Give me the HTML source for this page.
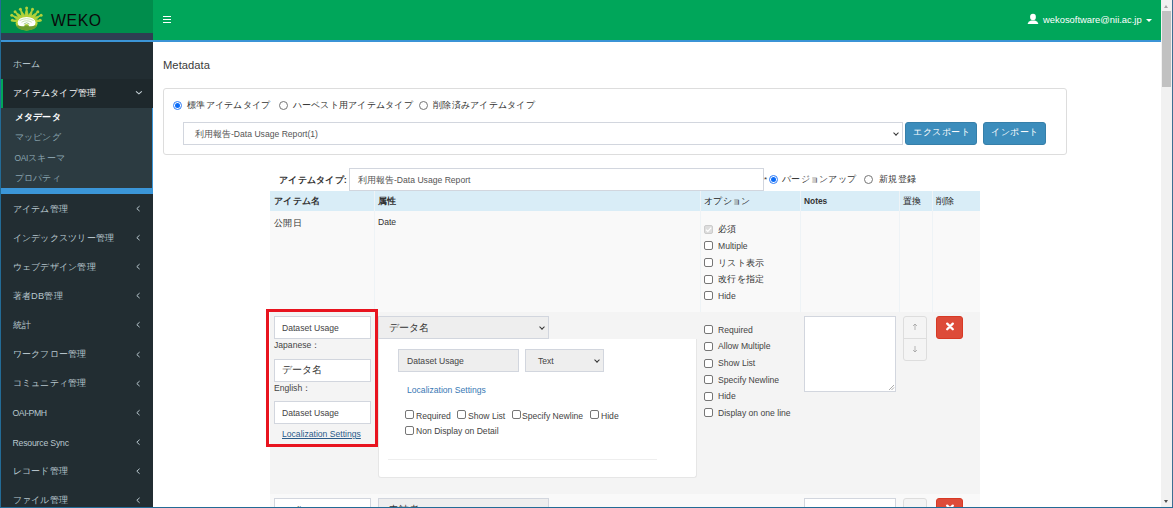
<!DOCTYPE html>
<html><head><meta charset="utf-8">
<style>
*{box-sizing:border-box;margin:0;padding:0}
html,body{width:1173px;height:508px;overflow:hidden;background:#fff}
body{position:relative;font-family:"Liberation Sans",sans-serif;font-size:9.3px;color:#333}
.a{position:absolute}
.t{position:absolute;white-space:nowrap;line-height:12px;height:12px;letter-spacing:0.25px}
.sb .t{color:#b8c7ce}
.chev{position:absolute;color:#b8c7ce;font-size:9px;line-height:12px}
.cb{position:absolute;width:9px;height:9px;border:1px solid #767676;border-radius:2px;background:#fff}
.rd{position:absolute;width:9px;height:9px;border:1px solid #767676;border-radius:50%;background:#fff}
.rd.on{border-color:#2f7cf6}
.rd.on:after{content:"";position:absolute;left:1px;top:1px;width:5px;height:5px;border-radius:50%;background:#0b6cf7}
.inp{position:absolute;background:#fff;border:1px solid #d2d6de}
.dis{position:absolute;background:#eee;border:1px solid #d2d6de}
.sel-chev{position:absolute;width:4px;height:4px;border-right:1.5px solid #333;border-bottom:1.5px solid #333;transform:rotate(45deg)}
.lbl{position:absolute;white-space:nowrap;line-height:12px;height:12px;color:#444;font-size:8.6px}
</style></head><body>

<!-- window borders -->
<div class="a" style="left:0;top:0;width:1px;height:508px;background:#236b96;z-index:50"></div>
<div class="a" style="left:1172px;top:0;width:1px;height:508px;background:#3d6f91;z-index:50"></div>
<div class="a" style="left:0;top:507px;width:1173px;height:1px;background:#236b96;z-index:50"></div>

<!-- logo -->
<div class="a" style="left:0;top:0;width:153px;height:33px;background:#008d4c"></div>
<div class="a" style="left:0;top:33px;width:153px;height:7px;background:#2e3e52"></div>
<svg class="a" style="left:8px;top:4px" width="38" height="30" viewBox="8 4 38 30">
  <path d="M13.5 21.5 L12.4 20.3 L17.5 19.8 L11.8 15.2 L18.5 17.5 L15.1 11.7 L21.8 16.3 L20.4 9.3 L24.8 15.8 L26.6 8.1 L28.4 15.8 L32.5 9.3 L31.2 16.3 L37.8 11.7 L34.5 17.5 L41.1 15.2 L35.5 19.8 L40.2 20.3 L39.5 21.5Z" fill="#b3d23a" stroke="#b3d23a" stroke-width="0.9" stroke-linejoin="round"/>
  <g fill="#b3d23a">
    <circle cx="26.6" cy="8.1" r="1.5"/><circle cx="20.4" cy="9.3" r="1.5"/><circle cx="32.5" cy="9.3" r="1.5"/>
    <circle cx="15.1" cy="11.7" r="1.5"/><circle cx="37.8" cy="11.7" r="1.5"/><circle cx="11.8" cy="15.2" r="1.5"/>
    <circle cx="41.1" cy="15.2" r="1.5"/><circle cx="12.4" cy="20.3" r="1.5"/><circle cx="40.2" cy="20.3" r="1.5"/>
  </g>
  <ellipse cx="26.6" cy="23.4" rx="11" ry="7" fill="#b3d23a"/>
  <path d="M16.1 25.5 A11 7 0 0 0 37.1 25.5 Z" fill="#6e9c2e"/>
  <path d="M17.6 22.4 Q18.2 17.4 26.6 17 Q35 17.4 35.6 22.4 Q35.5 25.2 33.2 25.9 Q30.5 26.4 28.9 26.3 L28.6 24.8 Q26.6 23.2 24.6 24.8 L24.3 26.3 Q22.7 26.4 20 25.9 Q17.7 25.2 17.6 22.4Z" fill="#fff"/>
  <path d="M19.5 20.6 Q26.6 16.8 33.7 20.6" stroke="#9fd07a" stroke-width="0.6" fill="none"/>
  <path d="M21.5 22.3 Q26.6 19.2 31.7 22.3" stroke="#9fd07a" stroke-width="0.6" fill="none"/>
  <path d="M23.8 24 Q26.6 21.6 29.4 24" stroke="#7cb85a" stroke-width="0.7" fill="none"/>
  
</svg>
<div class="t" style="left:51px;top:12.5px;height:16px;line-height:16px;font-size:15.8px;color:#0a0a0a;letter-spacing:0.6px">WEKO</div>

<!-- navbar -->
<div class="a" style="left:153px;top:0;width:1008px;height:40px;background:#00a65a"></div>
<div class="a" style="left:0;top:40px;width:1161px;height:2px;background:#3b94d6"></div>
<div class="a" style="left:163px;top:16px;width:8px;height:1.3px;background:#fff"></div>
<div class="a" style="left:163px;top:19px;width:8px;height:1.3px;background:#fff"></div>
<div class="a" style="left:163px;top:22px;width:8px;height:1.3px;background:#fff"></div>
<svg class="a" style="left:1027px;top:13px" width="12" height="12" viewBox="0 0 12 12">
  <ellipse cx="6" cy="4" rx="2.9" ry="3.3" fill="#fff"/>
  <path d="M0.6 11 Q1 8.2 4 7.4 L8 7.4 Q11 8.2 11.4 11Z" fill="#fff"/>
</svg>
<div class="t" style="left:1043px;top:14px;color:#fff;font-size:9.4px;letter-spacing:0">wekosoftware@nii.ac.jp</div>
<div class="a" style="left:1145.5px;top:19px;width:0;height:0;border-left:3px solid transparent;border-right:3px solid transparent;border-top:3px solid #fff"></div>

<!-- scrollbar -->
<div class="a" style="left:1161px;top:0;width:11px;height:507px;background:#f1f1f1"></div>
<div class="a" style="left:1162px;top:11px;width:9px;height:76px;background:#c1c1c1"></div>
<div class="a" style="left:1164px;top:5px;width:0;height:0;border-left:2.5px solid transparent;border-right:2.5px solid transparent;border-bottom:3px solid #a3a3a3"></div>
<div class="a" style="left:1163.8px;top:499.8px;width:0;height:0;border-left:2.8px solid transparent;border-right:2.8px solid transparent;border-top:3px solid #505050"></div>

<!-- sidebar -->
<div class="sb">
<div class="a" style="left:0;top:42px;width:153px;height:466px;background:#222d32"></div>
<div class="t" style="left:12.5px;top:57.5px">ホーム</div>
<div class="a" style="left:0;top:79px;width:153px;height:29px;background:#1e282c"></div>
<div class="a" style="left:1px;top:79px;width:2px;height:29px;background:#00a65a"></div>
<div class="t" style="left:13px;top:87px;color:#fff">アイテムタイプ管理</div>
<div class="a" style="left:0;top:108px;width:153px;height:80px;background:#2c3b41"></div>
<div class="a" style="left:152px;top:108px;width:1px;height:80px;background:#3b96d8"></div>
<div class="t" style="left:14.5px;top:111px;color:#fff;font-weight:bold">メタデータ</div>
<div class="t" style="left:14.5px;top:130.8px;color:#8aa4af">マッピング</div>
<div class="t" style="left:14.5px;top:151.5px;color:#8aa4af"><span style="font-size:8.4px;letter-spacing:-0.3px">OAI</span>スキーマ</div>
<div class="t" style="left:14.5px;top:171.5px;color:#8aa4af">プロパティ</div>
<div class="a" style="left:0;top:188px;width:153px;height:6px;background:#3b96d8"></div>
<div class="t" style="left:12.5px;top:202.8px">アイテム管理</div>
<div class="t" style="left:12.5px;top:231.7px">インデックスツリー管理</div>
<div class="t" style="left:12.5px;top:260.7px">ウェブデザイン管理</div>
<div class="t" style="left:12.5px;top:290.0px">著者DB管理</div>
<div class="t" style="left:12.5px;top:319.3px">統計</div>
<div class="t" style="left:12.5px;top:348.0px">ワークフロー管理</div>
<div class="t" style="left:12.5px;top:377.0px">コミュニティ管理</div>
<div class="t" style="left:12.5px;top:407px;font-size:8.7px;letter-spacing:-0.45px">OAI-PMH</div>
<div class="t" style="left:12.5px;top:437px;font-size:8.7px;letter-spacing:-0.2px">Resource Sync</div>
<div class="t" style="left:12.5px;top:465.0px">レコード管理</div>
<div class="t" style="left:12.5px;top:494.0px">ファイル管理</div>
</div>
<svg class="a" style="left:0;top:0" width="153" height="508" viewBox="0 0 153 508"><polyline points="136,91.3 138.9,93.8 141.8,91.3" fill="none" stroke="#c8d3d8" stroke-width="1.1"/><polyline points="139.6,206.1 136.8,208.6 139.6,211.1" fill="none" stroke="#b8c7ce" stroke-width="1"/><polyline points="139.6,235.2 136.8,237.7 139.6,240.2" fill="none" stroke="#b8c7ce" stroke-width="1"/><polyline points="139.6,264.1 136.8,266.6 139.6,269.1" fill="none" stroke="#b8c7ce" stroke-width="1"/><polyline points="139.6,293.1 136.8,295.6 139.6,298.1" fill="none" stroke="#b8c7ce" stroke-width="1"/><polyline points="139.6,322.2 136.8,324.7 139.6,327.2" fill="none" stroke="#b8c7ce" stroke-width="1"/><polyline points="139.6,352.1 136.8,354.6 139.6,357.1" fill="none" stroke="#b8c7ce" stroke-width="1"/><polyline points="139.6,381.1 136.8,383.6 139.6,386.1" fill="none" stroke="#b8c7ce" stroke-width="1"/><polyline points="139.6,410.2 136.8,412.7 139.6,415.2" fill="none" stroke="#b8c7ce" stroke-width="1"/><polyline points="139.6,439.7 136.8,442.2 139.6,444.7" fill="none" stroke="#b8c7ce" stroke-width="1"/><polyline points="139.6,468.7 136.8,471.2 139.6,473.7" fill="none" stroke="#b8c7ce" stroke-width="1"/><polyline points="139.6,497.8 136.8,500.3 139.6,502.8" fill="none" stroke="#b8c7ce" stroke-width="1"/></svg>

<!-- content -->
<div class="t" style="left:163px;top:57.6px;height:14px;line-height:14px;font-size:11.2px;color:#3a3a3a;letter-spacing:0.05px">Metadata</div>

<div class="a" style="left:163px;top:88px;width:904px;height:67px;border:1px solid #ddd;border-radius:3px"></div>
<div class="rd on" style="left:173px;top:101px"></div>
<div class="t" style="left:187px;top:99px">標準アイテムタイプ</div>
<div class="rd" style="left:279px;top:101px"></div>
<div class="t" style="left:292.5px;top:99px">ハーベスト用アイテムタイプ</div>
<div class="rd" style="left:419px;top:101px"></div>
<div class="t" style="left:433px;top:99px">削除済みアイテムタイプ</div>

<div class="inp" style="left:183px;top:122px;width:720px;height:23px"></div>
<div class="t" style="left:195px;top:127.5px;font-size:8.6px;letter-spacing:0;color:#555">利用報告-Data Usage Report(1)</div>
<div class="sel-chev" style="left:894px;top:130.5px"></div>
<div class="a" style="left:905px;top:122px;width:72px;height:23px;background:#3c8dbc;border:1px solid #367fa9;border-radius:3px"></div>
<div class="t" style="left:913px;top:126px;color:#fff;font-size:9.3px;letter-spacing:0.5px">エクスポート</div>
<div class="a" style="left:983px;top:122px;width:63px;height:23px;background:#3c8dbc;border:1px solid #367fa9;border-radius:3px"></div>
<div class="t" style="left:991px;top:126px;color:#fff;font-size:9.3px;letter-spacing:0.5px">インポート</div>

<div class="t" style="left:279px;top:173.5px;font-weight:bold;color:#333">アイテムタイプ:</div>
<div class="inp" style="left:349px;top:168px;width:415px;height:23px"></div>
<div class="t" style="left:358px;top:173.5px;font-size:8.6px;letter-spacing:0;color:#555">利用報告-Data Usage Report</div>
<div class="t" style="left:764px;top:173.5px;font-size:8px;letter-spacing:0">*</div>
<div class="rd on" style="left:769px;top:175px"></div>
<div class="t" style="left:782px;top:173px">バージョンアップ</div>
<div class="rd" style="left:864px;top:175px"></div>
<div class="t" style="left:879px;top:173px">新規登録</div>

<!-- table -->
<div class="a" style="left:270px;top:191px;width:710px;height:20px;background:#d9edf7"></div>
<div class="a" style="left:270px;top:211px;width:710px;height:101px;background:#f9f9f9"></div>
<div class="a" style="left:270px;top:312px;width:710px;height:182px;background:#f4f4f4"></div>
<div class="a" style="left:270px;top:494px;width:710px;height:14px;background:#f9f9f9"></div>
<div class="a" style="left:374px;top:191px;width:1px;height:121px;background:#eef3f6"></div>
<div class="a" style="left:700px;top:191px;width:1px;height:121px;background:#eef3f6"></div>
<div class="a" style="left:800px;top:191px;width:1px;height:121px;background:#eef3f6"></div>
<div class="a" style="left:899px;top:191px;width:1px;height:121px;background:#eef3f6"></div>
<div class="a" style="left:932px;top:191px;width:1px;height:121px;background:#eef3f6"></div>

<div class="t" style="left:274px;top:195px;font-weight:bold">アイテム名</div>
<div class="t" style="left:378px;top:195px;font-weight:bold">属性</div>
<div class="t" style="left:704px;top:195px;color:#222">オプション</div>
<div class="t" style="left:804px;top:195px;font-weight:bold;font-size:8.4px;letter-spacing:0">Notes</div>
<div class="t" style="left:903px;top:195px;color:#222">置換</div>
<div class="t" style="left:936px;top:195px;color:#222">削除</div>

<div class="t" style="left:274px;top:216.5px">公開日</div>
<div class="t" style="left:378px;top:216px;font-size:8.6px;letter-spacing:0">Date</div>

<div class="cb" style="left:704px;top:224.5px;background:#ddd;border-color:#ccc"></div><svg class="a" style="left:704px;top:224.5px" width="9" height="9"><polyline points="2,4.6 3.8,6.4 7.2,2.6" fill="none" stroke="#fff" stroke-width="1.3"/></svg>
<div class="t" style="left:718px;top:223px">必須</div>
<div class="cb" style="left:704px;top:241px"></div>
<div class="lbl" style="left:718px;top:240px">Multiple</div>
<div class="cb" style="left:704px;top:258px"></div>
<div class="t" style="left:718px;top:256.5px">リスト表示</div>
<div class="cb" style="left:704px;top:274.5px"></div>
<div class="t" style="left:718px;top:273px">改行を指定</div>
<div class="cb" style="left:704px;top:291px"></div>
<div class="lbl" style="left:718px;top:290px">Hide</div>

<!-- row 2 -->
<div class="inp" style="left:274px;top:316px;width:97px;height:23px"></div>
<div class="lbl" style="left:282px;top:321.5px">Dataset Usage</div>
<div class="lbl" style="left:274px;top:339px">Japanese：</div>
<div class="inp" style="left:274px;top:359px;width:97px;height:23px"></div>
<div class="t" style="left:281.5px;top:364px;font-size:10px">データ名</div>
<div class="lbl" style="left:274px;top:381.5px">English：</div>
<div class="inp" style="left:274px;top:401px;width:97px;height:23px"></div>
<div class="lbl" style="left:282px;top:406.5px">Dataset Usage</div>
<div class="lbl" style="left:282px;top:428px;color:#2a5b8a;text-decoration:underline">Localization Settings</div>
<div class="a" style="left:266px;top:309px;width:112px;height:137.5px;border:3.8px solid #e8141f"></div>

<div class="dis" style="left:378px;top:316px;width:171px;height:23px;background:#eee"></div>
<div class="t" style="left:388.5px;top:321.5px;font-size:10px">データ名</div>
<div class="sel-chev" style="left:540px;top:324.8px"></div>
<div class="a" style="left:378px;top:339px;width:319px;height:139px;background:#fff;border:1px solid #e6e6e6;border-top:0;border-radius:0 0 3px 3px"></div>
<div class="dis" style="left:398px;top:349px;width:121px;height:23px"></div>
<div class="lbl" style="left:407px;top:354.5px">Dataset Usage</div>
<div class="dis" style="left:525px;top:349px;width:79px;height:23px"></div>
<div class="lbl" style="left:538px;top:354.5px">Text</div>
<div class="sel-chev" style="left:595px;top:358px"></div>
<div class="lbl" style="left:407px;top:383.5px;color:#3878b4">Localization Settings</div>

<div class="cb" style="left:405px;top:410px"></div>
<div class="lbl" style="left:416px;top:409.5px">Required</div>
<div class="cb" style="left:457px;top:410px"></div>
<div class="lbl" style="left:468px;top:409.5px">Show List</div>
<div class="cb" style="left:512px;top:410px"></div>
<div class="lbl" style="left:522px;top:409.5px">Specify Newline</div>
<div class="cb" style="left:590px;top:410px"></div>
<div class="lbl" style="left:601px;top:409.5px">Hide</div>
<div class="cb" style="left:405px;top:426px"></div>
<div class="lbl" style="left:416px;top:425px">Non Display on Detail</div>
<div class="a" style="left:388px;top:459px;width:269px;height:1px;background:#eee"></div>

<div class="cb" style="left:704px;top:325px"></div>
<div class="lbl" style="left:718px;top:323.5px">Required</div>
<div class="cb" style="left:704px;top:341.5px"></div>
<div class="lbl" style="left:718px;top:340px">Allow Multiple</div>
<div class="cb" style="left:704px;top:358.5px"></div>
<div class="lbl" style="left:718px;top:357px">Show List</div>
<div class="cb" style="left:704px;top:375px"></div>
<div class="lbl" style="left:718px;top:373.5px">Specify Newline</div>
<div class="cb" style="left:704px;top:391.5px"></div>
<div class="lbl" style="left:718px;top:390px">Hide</div>
<div class="cb" style="left:704px;top:408px"></div>
<div class="lbl" style="left:718px;top:406.5px">Display on one line</div>

<div class="inp" style="left:804px;top:316px;width:92px;height:76px"></div><svg class="a" style="left:888px;top:384px" width="7" height="7"><line x1="1" y1="6" x2="6" y2="1" stroke="#888" stroke-width="0.7"/><line x1="3.5" y1="6" x2="6" y2="3.5" stroke="#888" stroke-width="0.7"/></svg>
<div class="a" style="left:903px;top:316px;width:24px;height:45px;background:#f4f4f4;border:1px solid #ddd;border-radius:3px"></div>
<div class="a" style="left:903px;top:338px;width:24px;height:1px;background:#ddd"></div>
<svg class="a" style="left:911px;top:323px" width="8" height="8"><line x1="4" y1="1" x2="4" y2="7" stroke="#999" stroke-width="0.7"/><polyline points="2,3 4,1 6,3" fill="none" stroke="#999" stroke-width="0.7"/></svg>
<svg class="a" style="left:911px;top:345px" width="8" height="8"><line x1="4" y1="1" x2="4" y2="7" stroke="#999" stroke-width="0.7"/><polyline points="2,5 4,7 6,5" fill="none" stroke="#999" stroke-width="0.7"/></svg>
<div class="a" style="left:936px;top:316px;width:27px;height:23px;background:#dd4b39;border:1px solid #d73925;border-radius:3px"></div>
<svg class="a" style="left:944px;top:320px" width="12" height="12"><path d="M3.2 3.6 L8.8 9.2 M8.8 3.6 L3.2 9.2" stroke="#fff" stroke-width="2.3" stroke-linecap="round"/></svg>

<!-- row 3 -->
<div class="inp" style="left:274px;top:498px;width:97px;height:23px"></div>
<div class="dis" style="left:378px;top:498px;width:171px;height:23px"></div>
<div class="inp" style="left:804px;top:498px;width:92px;height:23px"></div>
<div class="a" style="left:903px;top:498px;width:24px;height:23px;background:#f4f4f4;border:1px solid #ddd;border-radius:3px"></div>
<div class="a" style="left:936px;top:498px;width:27px;height:23px;background:#dd4b39;border:1px solid #d73925;border-radius:3px"></div>
<svg class="a" style="left:944px;top:502px" width="12" height="12"><path d="M3.2 3.6 L8.8 9.2 M8.8 3.6 L3.2 9.2" stroke="#fff" stroke-width="2.3" stroke-linecap="round"/></svg>
<div class="lbl" style="left:282px;top:503.5px">Applicant</div>
<div class="t" style="left:388.5px;top:503.5px;font-size:10px">申請者</div>

</body></html>
